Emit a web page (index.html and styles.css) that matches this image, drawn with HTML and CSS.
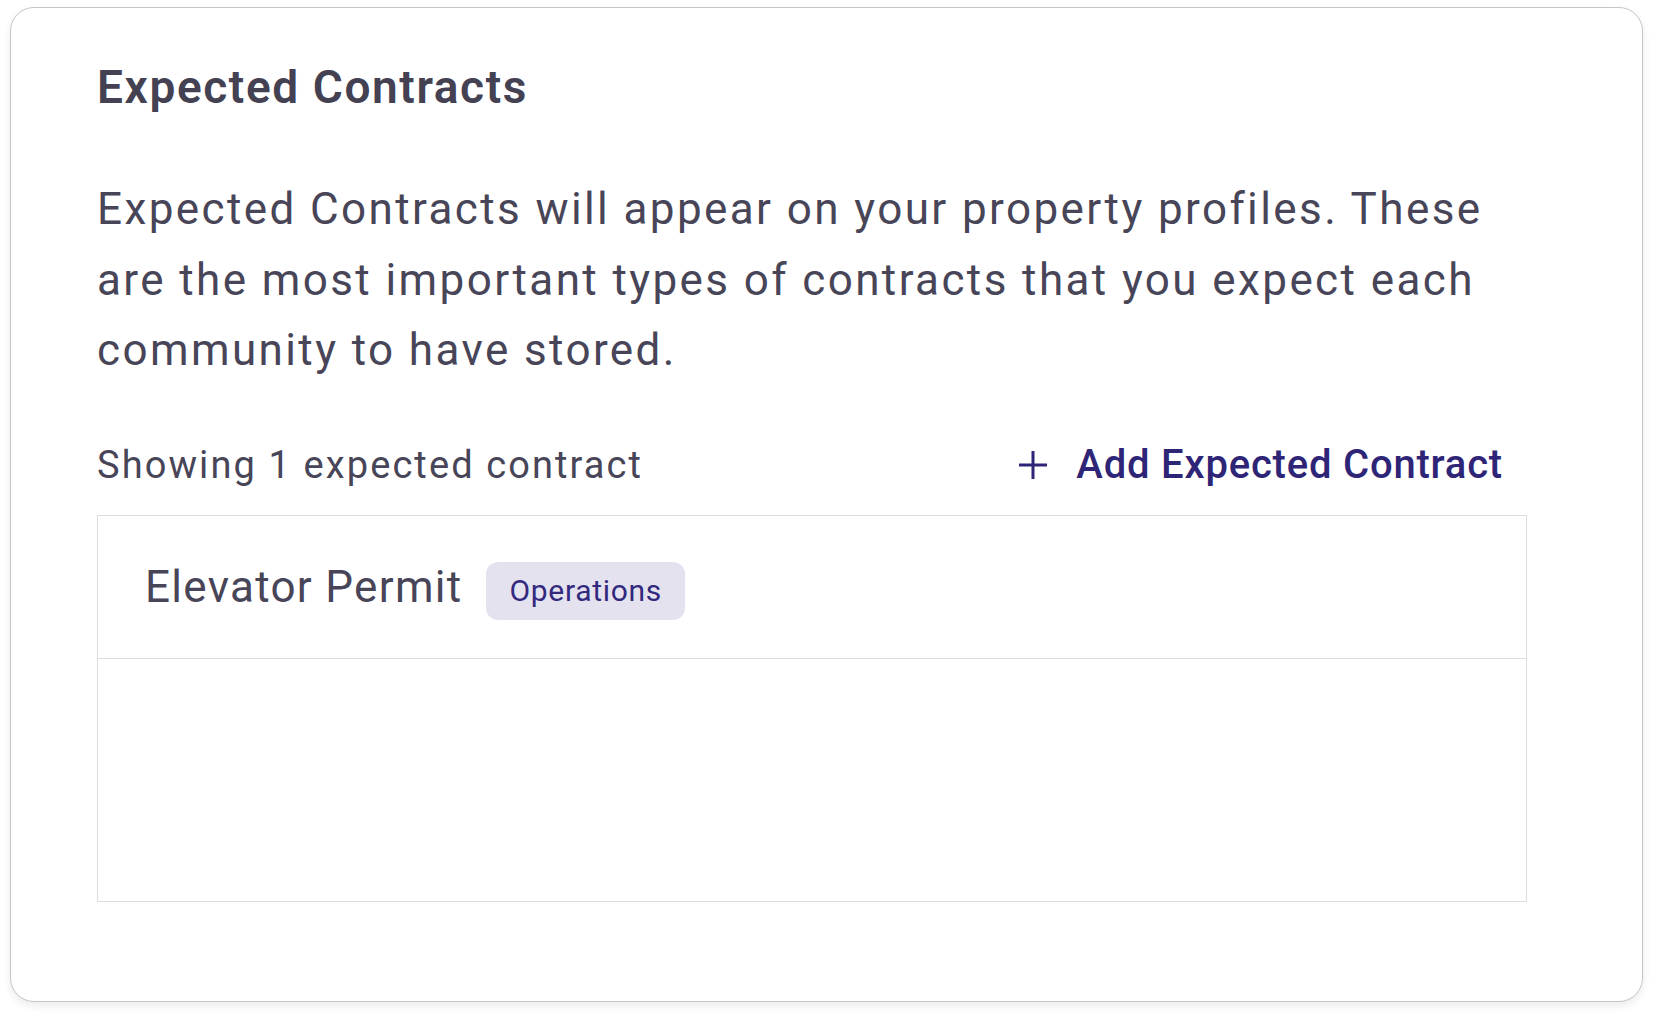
FILE: index.html
```html
<!DOCTYPE html>
<html>
<head>
<meta charset="utf-8">
<link rel="stylesheet" href="styles.css">
</head>
<body>
<div class="card">
  <h1 class="title">Expected Contracts</h1>
  <p class="desc">Expected Contracts will appear on your property profiles. These are the most important types of contracts that you expect each community to have stored.</p>
  <div class="toolbar">
    <span class="count">Showing 1 expected contract</span>
    <a class="add">
      <svg class="plus" width="30" height="30" viewBox="0 0 30 30"><path d="M15 1V29M1 15H29" stroke="currentColor" stroke-width="3" fill="none"/></svg>
      <span>Add Expected Contract</span>
    </a>
  </div>
  <div class="table">
    <div class="row">
      <span class="name">Elevator Permit</span>
      <span class="badge">Operations</span>
    </div>
    <div class="empty"></div>
  </div>
</div>
</body>
</html>
```
FILE: styles.css
```css
html, body {
  margin: 0;
  padding: 0;
  background: #ffffff;
}
body {
  padding: 7px 11px 14px 10px;
  font-family: Roboto, "Liberation Sans", sans-serif;
  color: #474557;
}
.card {
  box-sizing: border-box;
  height: 995px;
  border: 1.5px solid #c6c6c6;
  border-radius: 24px;
  box-shadow: 0 4px 8px rgba(0,0,0,0.08);
  padding: 51px 115px 0 86px;
  background: #fff;
}
.title {
  margin: 0;
  font-size: 46px;
  line-height: 56px;
  font-weight: 600;
  color: #434152;
  letter-spacing: 1.6px;
}
.desc {
  margin: 59px 0 0;
  font-size: 44px;
  line-height: 70.5px;
  font-weight: 400;
  letter-spacing: 2.4px;
}
.toolbar {
  margin-top: 55px;
  display: flex;
  align-items: center;
  justify-content: space-between;
  height: 48px;
  padding-right: 24px;
}
.count {
  font-size: 38px;
  line-height: 48px;
  letter-spacing: 2.1px;
}
.add {
  display: flex;
  align-items: center;
  color: #2f2577;
  font-size: 40px;
  line-height: 48px;
  font-weight: 500;
  letter-spacing: 0.8px;
}
.plus {
  margin-right: 28px;
}
.table {
  margin-top: 26px;
  border: 1.5px solid #dcdcdc;
}
.row {
  height: 143px;
  display: flex;
  align-items: center;
  padding-left: 47px;
  border-bottom: 1.5px solid #dcdcdc;
  box-sizing: border-box;
}
.name {
  font-size: 44px;
  line-height: 52px;
  letter-spacing: 1.3px;
}
.badge {
  margin-left: 24px;
  margin-top: 8px;
  height: 58px;
  box-sizing: border-box;
  padding: 0 23px;
  display: flex;
  align-items: center;
  background: #e4e2ef;
  border-radius: 12px;
  color: #33297e;
  font-size: 30px;
  font-weight: 400;
  letter-spacing: 0.7px;
}
.empty {
  height: 242px;
}
```
